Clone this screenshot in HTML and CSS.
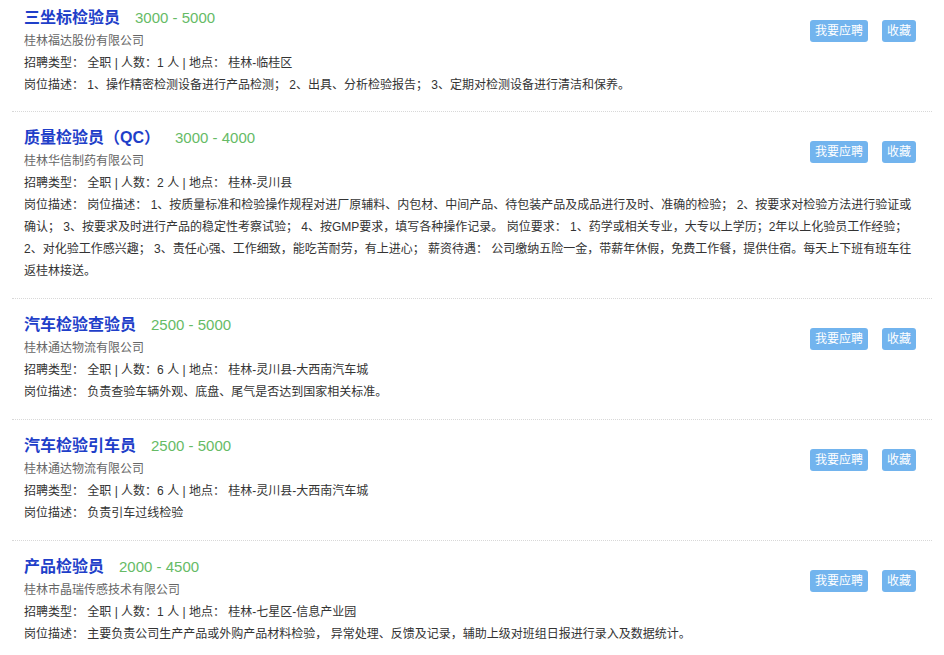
FILE: index.html
```html
<!DOCTYPE html>
<html lang="zh-CN">
<head>
  <meta charset="UTF-8" />
  <meta name="viewport" content="width=device-width, initial-scale=1.0"/>
  <title>招聘信息</title>
  <link rel="stylesheet" href="styles.css">
</head>
<body>
  <ul class="job-list">
    <li class="job">
      <div class="actions">
        <button class="btn">我要应聘</button>
        <button class="btn">收藏</button>
      </div>
      <div class="job-title">三坐标检验员<span class="salary">3000 - 5000</span></div>
      <div class="company">桂林福达股份有限公司</div>
      <div class="meta">招聘类型： 全职 | 人数：1 人 | 地点： 桂林-临桂区</div>
      <div class="desc">岗位描述： 1、操作精密检测设备进行产品检测； 2、出具、分析检验报告； 3、定期对检测设备进行清洁和保养。</div>
    </li>

    <li class="job">
      <div class="actions">
        <button class="btn">我要应聘</button>
        <button class="btn">收藏</button>
      </div>
      <div class="job-title">质量检验员（QC）<span class="salary">3000 - 4000</span></div>
      <div class="company">桂林华信制药有限公司</div>
      <div class="meta">招聘类型： 全职 | 人数：2 人 | 地点： 桂林-灵川县</div>
      <div class="desc">岗位描述： 岗位描述： 1、按质量标准和检验操作规程对进厂原辅料、内包材、中间产品、待包装产品及成品进行及时、准确的检验； 2、按要求对检验方法进行验证或确认； 3、按要求及时进行产品的稳定性考察试验； 4、按GMP要求，填写各种操作记录。 岗位要求： 1、药学或相关专业，大专以上学历；2年以上化验员工作经验； 2、对化验工作感兴趣； 3、责任心强、工作细致，能吃苦耐劳，有上进心； 薪资待遇： 公司缴纳五险一金，带薪年休假，免费工作餐，提供住宿。每天上下班有班车往返桂林接送。</div>
    </li>

    <li class="job">
      <div class="actions">
        <button class="btn">我要应聘</button>
        <button class="btn">收藏</button>
      </div>
      <div class="job-title">汽车检验查验员<span class="salary">2500 - 5000</span></div>
      <div class="company">桂林通达物流有限公司</div>
      <div class="meta">招聘类型： 全职 | 人数：6 人 | 地点： 桂林-灵川县-大西南汽车城</div>
      <div class="desc">岗位描述： 负责查验车辆外观、底盘、尾气是否达到国家相关标准。</div>
    </li>

    <li class="job">
      <div class="actions">
        <button class="btn">我要应聘</button>
        <button class="btn">收藏</button>
      </div>
      <div class="job-title">汽车检验引车员<span class="salary">2500 - 5000</span></div>
      <div class="company">桂林通达物流有限公司</div>
      <div class="meta">招聘类型： 全职 | 人数：6 人 | 地点： 桂林-灵川县-大西南汽车城</div>
      <div class="desc">岗位描述： 负责引车过线检验</div>
    </li>

    <li class="job">
      <div class="actions">
        <button class="btn">我要应聘</button>
        <button class="btn">收藏</button>
      </div>
      <div class="job-title">产品检验员<span class="salary">2000 - 4500</span></div>
      <div class="company">桂林市晶瑞传感技术有限公司</div>
      <div class="meta">招聘类型： 全职 | 人数：1 人 | 地点： 桂林-七星区-信息产业园</div>
      <div class="desc">岗位描述： 主要负责公司生产产品或外购产品材料检验， 异常处理、反馈及记录，辅助上级对班组日报进行录入及数据统计。</div>
    </li>
  </ul>
</body>
</html>
```

FILE: styles.css
```css
body {
  margin: 0;
  background: #fff;
  font-family: "Liberation Sans", "Noto Sans CJK SC", sans-serif;
  color: #333;
}

.job-list {
  list-style: none;
  margin: 0 12px;
  padding: 0;
}

.job {
  padding: 14px 16px 16px 12px;
  border-bottom: 1px dotted #d8d8d8;
  font-size: 12px;
  line-height: 22px;
}

.job:first-child {
  padding-top: 6px;
  padding-bottom: 15px;
}

.actions {
  float: right;
  margin-top: 15px;
  display: flex;
  gap: 14px;
}

.job:first-child .actions {
  margin-top: 14px;
}

.btn {
  background-color: #72b4ee;
  color: #fff;
  border: none;
  border-radius: 3px;
  height: 22px;
  padding: 0 5px;
  font-family: inherit;
  font-size: 12px;
  line-height: 22px;
  cursor: pointer;
}

.job-title {
  font-size: 16px;
  line-height: 24px;
  font-weight: bold;
  color: #1f3fc9;
}

.salary {
  margin-left: 15px;
  font-size: 15px;
  font-weight: normal;
  color: #66bb66;
}

.company {
  color: #666;
}

.meta,
.desc {
  color: #333;
}
```
